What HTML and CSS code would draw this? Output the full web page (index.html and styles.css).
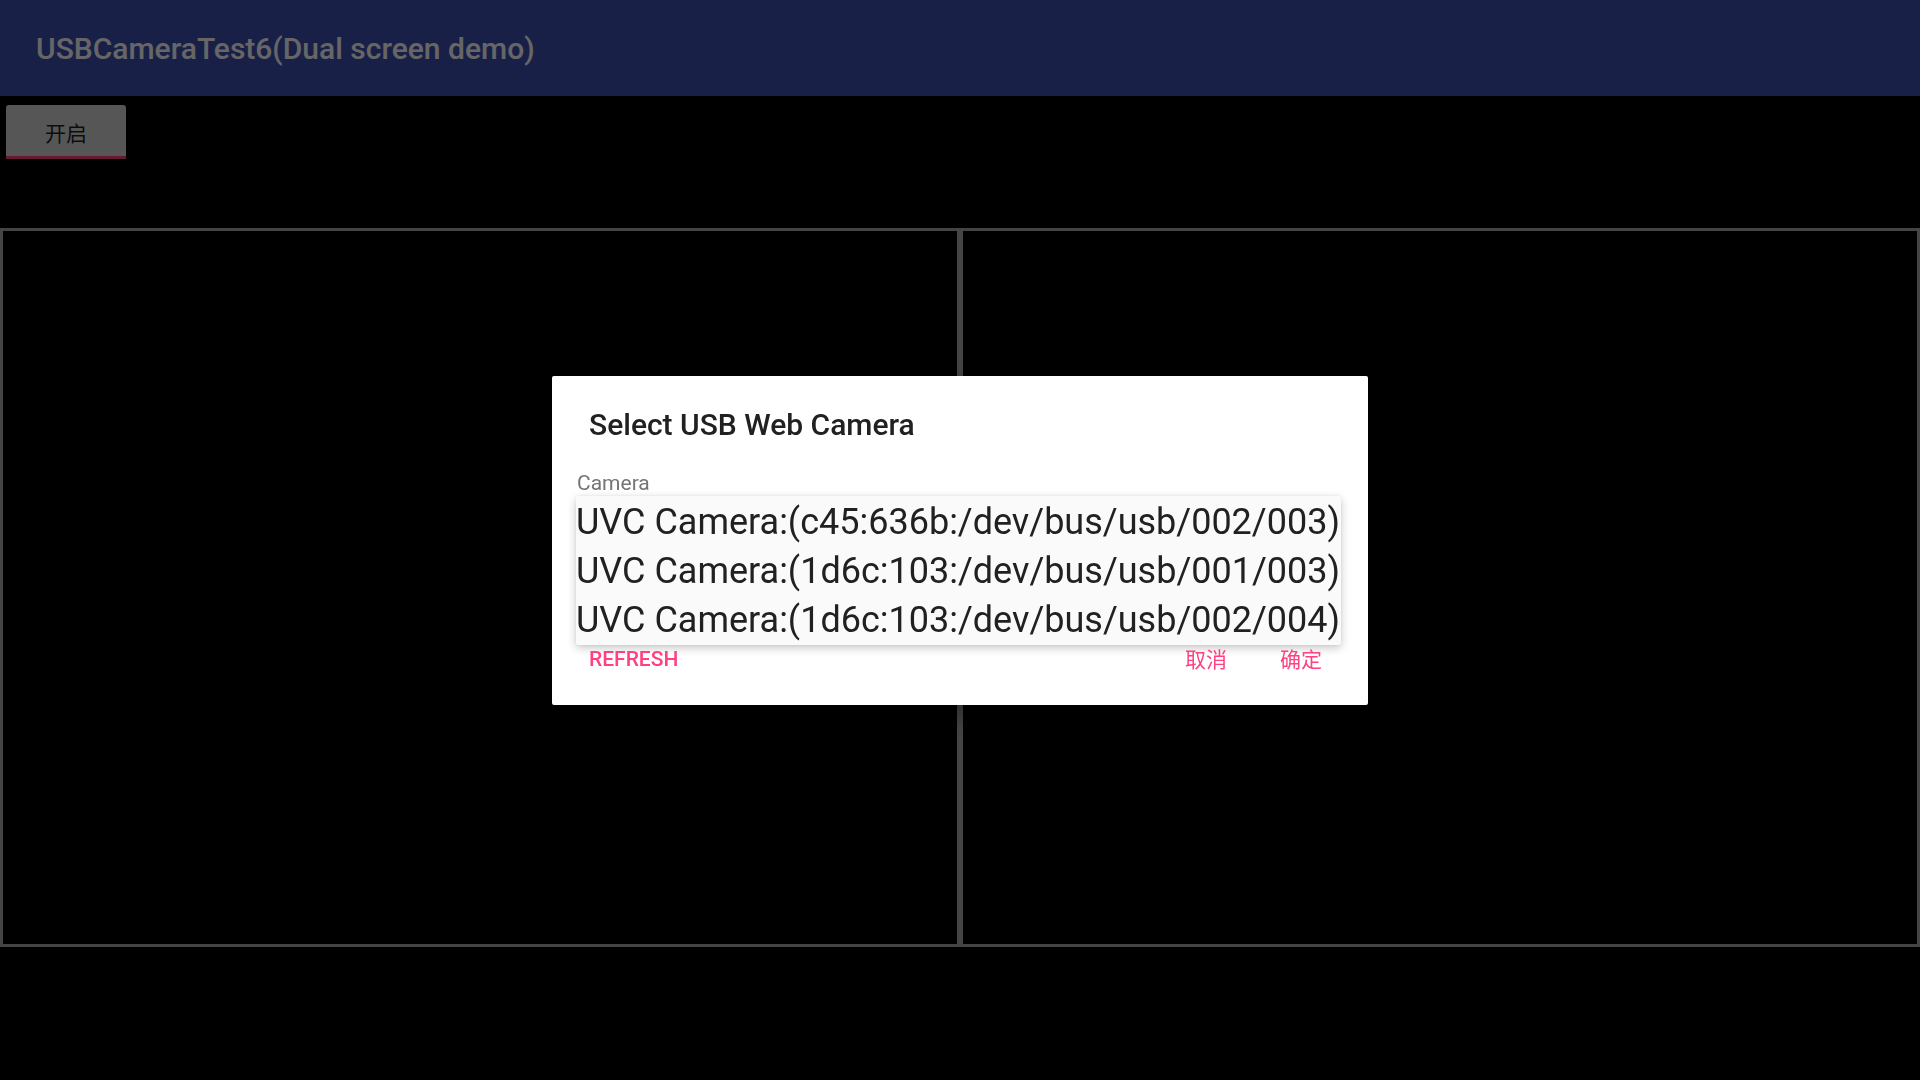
FILE: index.html
```html
<!DOCTYPE html>
<html lang="zh">
<head>
<meta charset="utf-8">
<title>USBCameraTest6</title>
<link rel="stylesheet" href="styles.css">
</head>
<body>
<div class="app">
  <header class="appbar">
    <h1 class="appbar-title">USBCameraTest6(Dual screen demo)</h1>
  </header>
  <div class="toolbar">
    <button class="btn-start">开启</button>
  </div>
  <div class="panels">
    <div class="panel"></div>
    <div class="panel"></div>
  </div>
</div>
<div class="scrim">
  <div class="dialog">
    <div class="dialog-title">Select USB Web Camera</div>
    <div class="field-label">Camera</div>
    <ul class="camera-list">
      <li>UVC Camera:(c45:636b:/dev/bus/usb/002/003)</li>
      <li>UVC Camera:(1d6c:103:/dev/bus/usb/001/003)</li>
      <li>UVC Camera:(1d6c:103:/dev/bus/usb/002/004)</li>
    </ul>
    <div class="dialog-actions">
      <span class="action action-refresh">REFRESH</span>
      <span class="spacer"></span>
      <span class="action action-cjk">取消</span>
      <span class="action action-cjk">确定</span>
    </div>
  </div>
</div>
</body>
</html>
```

FILE: styles.css
```css
html, body {
  margin: 0;
  padding: 0;
  width: 1920px;
  height: 1080px;
  background: #000;
  overflow: hidden;
  font-family: Roboto, "Noto Sans CJK SC", sans-serif;
}

.app {
  display: flex;
  flex-direction: column;
  height: 1080px;
}

.appbar {
  height: 96px;
  background: #3f51b5;
  display: flex;
  align-items: center;
  padding-left: 36px;
  box-sizing: border-box;
}

.appbar-title {
  margin: 0;
  font-family: Roboto, sans-serif;
  font-weight: 500;
  font-size: 30px;
  line-height: 35px;
  color: #fff;
  padding-top: 1px;
}

.toolbar {
  height: 132px;
  box-sizing: border-box;
  padding: 9px 6px;
}

.btn-start {
  width: 120px;
  height: 54px;
  border: none;
  border-radius: 3px 3px 0 0;
  background: #d6d7d7;
  border-bottom: 3px solid #ff4081;
  font-family: "Noto Sans CJK SC", sans-serif;
  font-size: 21px;
  color: rgba(0, 0, 0, 0.87);
  padding: 0;
  padding-top: 2px;
}

.panels {
  display: flex;
  height: 719px;
}

.panel {
  flex: 1;
  border: 3px solid #aaa;
  box-sizing: border-box;
}

.scrim {
  position: fixed;
  inset: 0;
  background: rgba(0, 0, 0, 0.6);
  display: flex;
  align-items: center;
  justify-content: center;
}

.dialog {
  width: 816px;
  height: 329px;
  background: #fff;
  border-radius: 2px;
  box-sizing: border-box;
  display: flex;
  flex-direction: column;
  align-items: flex-start;
  box-shadow: 0 8px 24px rgba(0, 0, 0, 0.4);
}

.dialog-title {
  margin: 31px 0 0 37px;
  font-weight: 500;
  font-size: 30px;
  line-height: 35px;
  color: #212121;
}

.field-label {
  margin: 29px 0 0 25px;
  font-size: 21px;
  line-height: 25px;
  color: #757575;
}

.camera-list {
  list-style: none;
  margin: 0 0 0 24px;
  padding: 2px 0 0 0;
  background: #fafafa;
  box-shadow: 0 3px 10px rgba(0, 0, 0, 0.22), 0 0 2px rgba(0, 0, 0, 0.08);
  border-radius: 2px;
}

.camera-list li {
  font-size: 36px;
  line-height: 49px;
  color: #212121;
  padding: 0 1px 0 0;
  white-space: nowrap;
}

.dialog-actions {
  align-self: stretch;
  display: flex;
  align-items: center;
  margin: 1px 46px 0 37px;
}

.spacer {
  flex: 1;
}

.action {
  color: #ff4081;
  font-size: 21px;
  line-height: 25px;
}

.action-refresh {
  font-weight: 500;
}

.action-cjk {
  font-family: "Noto Sans CJK SC", sans-serif;
  font-size: 21px;
  margin-left: 53px;
  margin-bottom: 2px;
}
```
